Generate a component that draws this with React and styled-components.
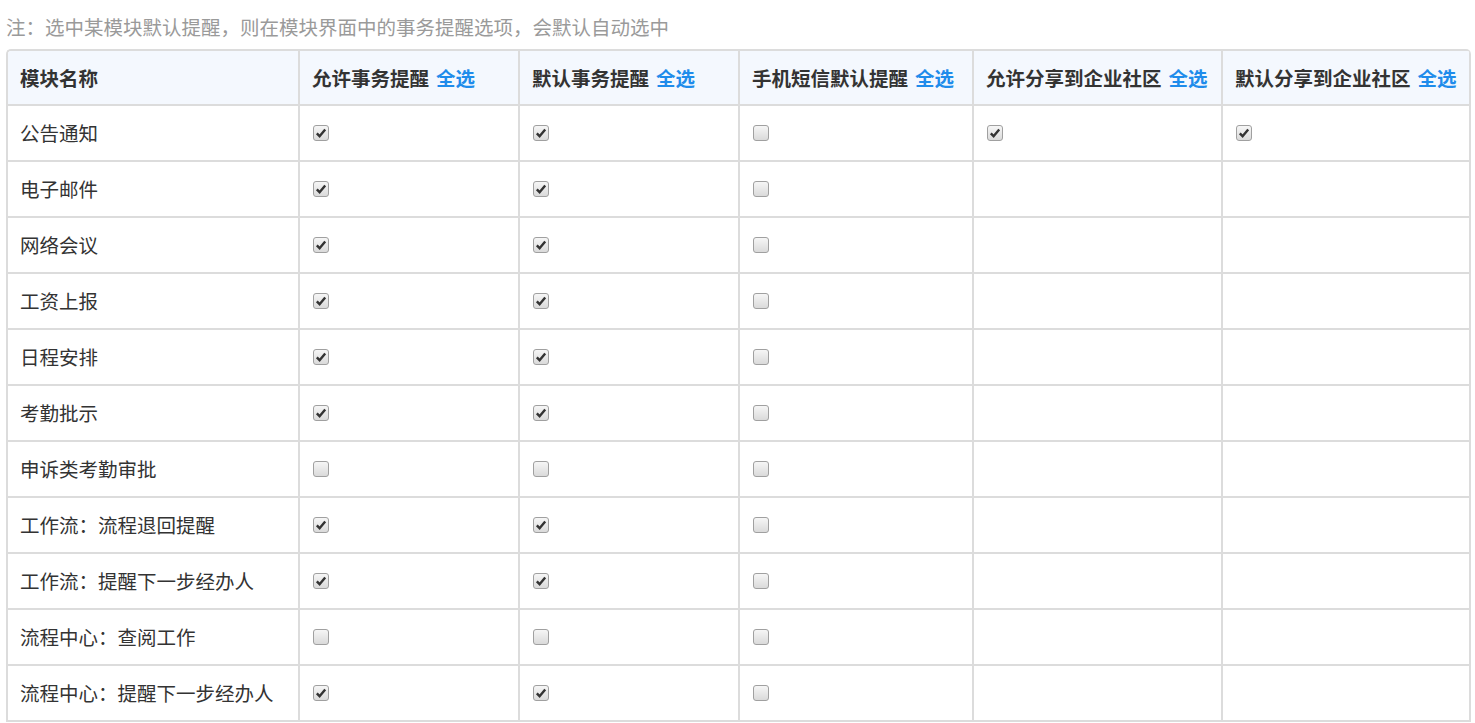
import React, {useState} from 'react';
import styled, {createGlobalStyle} from 'styled-components';

const GlobalStyle = createGlobalStyle`
  body {
    margin: 0;
    background: #fff;
    font-family: "Noto Sans CJK SC", "Liberation Sans", sans-serif;
  }
`;

const Page = styled.div`
  padding: 0 4px 0 6px;
`;

const Note = styled.div`
  padding: 10px 0 6px;
  line-height: 33px;
  font-size: 19.5px;
  color: #9a9a9a;
`;

const Grid = styled.div`
  display: grid;
  grid-template-columns: 292px 220px 220px 234px 249px 248px;
  width: max-content;
  border-top: 2px solid #dcdcdc;
  border-left: 2px solid #dcdcdc;
  border-radius: 5px 5px 0 0;
  overflow: hidden;
`;

const Cell = styled.div`
  box-sizing: border-box;
  height: ${props => (props.$head ? 55 : 56)}px;
  display: flex;
  align-items: center;
  padding-left: 12px;
  padding-bottom: 1px;
  border-right: 2px solid #dcdcdc;
  border-bottom: 2px solid #dcdcdc;
  background: ${props => (props.$head ? '#f4f8fe' : '#fff')};
  font-size: 19.5px;
  font-weight: ${props => (props.$head ? 700 : 400)};
  color: #333;
  white-space: nowrap;
`;

const SelectAll = styled.a`
  margin-left: 7px;
  color: #1f8ceb;
  cursor: pointer;
`;

const Box = styled.span`
  box-sizing: border-box;
  width: 16px;
  height: 16px;
  margin-left: 1px;
  border: 1px solid #a0a0a0;
  border-radius: 3px;
  background: linear-gradient(#f6f6f6, #dadada);
  display: flex;
  align-items: center;
  justify-content: center;
  cursor: pointer;
`;

const Checkbox = ({checked, onToggle}) => (
  <Box onClick={onToggle}>
    {checked && (
      <svg width="12" height="12" viewBox="0 0 12 12">
        <path d="M1.8 6.4 L4.6 9.2 L10.2 2.4" fill="none" stroke="#333" strokeWidth="2.4" strokeLinejoin="miter" />
      </svg>
    )}
  </Box>
);

const columns = ['允许事务提醒', '默认事务提醒', '手机短信默认提醒', '允许分享到企业社区', '默认分享到企业社区'];

const initialRows = [
  ['公告通知', [1, 1, 0, 1, 1]],
  ['电子邮件', [1, 1, 0]],
  ['网络会议', [1, 1, 0]],
  ['工资上报', [1, 1, 0]],
  ['日程安排', [1, 1, 0]],
  ['考勤批示', [1, 1, 0]],
  ['申诉类考勤审批', [0, 0, 0]],
  ['工作流：流程退回提醒', [1, 1, 0]],
  ['工作流：提醒下一步经办人', [1, 1, 0]],
  ['流程中心：查阅工作', [0, 0, 0]],
  ['流程中心：提醒下一步经办人', [1, 1, 0]],
];

const App = () => {
  const [rows, setRows] = useState(initialRows);

  const toggle = (r, c) => {
    setRows(rows.map((row, i) => {
      if (i !== r) return row;
      const vals = [...row[1]];
      vals[c] = vals[c] ? 0 : 1;
      return [row[0], vals];
    }));
  };

  const selectAll = c => {
    setRows(rows.map(row => {
      if (row[1][c] === undefined) return row;
      const vals = [...row[1]];
      vals[c] = 1;
      return [row[0], vals];
    }));
  };

  return (
    <Page>
      <GlobalStyle />
      <Note>注：选中某模块默认提醒，则在模块界面中的事务提醒选项，会默认自动选中</Note>
      <Grid>
        <Cell $head>模块名称</Cell>
        {columns.map((name, c) => (
          <Cell $head key={name}>
            {name}
            <SelectAll onClick={() => selectAll(c)}>全选</SelectAll>
          </Cell>
        ))}
        {rows.map(([name, vals], r) => (
          <React.Fragment key={name}>
            <Cell>{name}</Cell>
            {columns.map((col, c) => (
              <Cell key={col}>
                {vals[c] !== undefined && (
                  <Checkbox checked={!!vals[c]} onToggle={() => toggle(r, c)} />
                )}
              </Cell>
            ))}
          </React.Fragment>
        ))}
      </Grid>
    </Page>
  );
};

export default App;
